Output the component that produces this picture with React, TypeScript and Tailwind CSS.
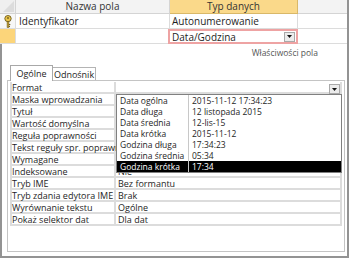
import React from 'react'

const props: [string, string][] = [
  ['Format', ''],
  ['Maska wprowadzania', ''],
  ['Tytuł', ''],
  ['Wartość domyślna', ''],
  ['Reguła poprawności', ''],
  ['Tekst reguły spr. poprawności', ''],
  ['Wymagane', 'Nie'],
  ['Indeksowane', 'Nie'],
  ['Tryb IME', 'Bez formantu'],
  ['Tryb zdania edytora IME', 'Brak'],
  ['Wyrównanie tekstu', 'Ogólne'],
  ['Pokaż selektor dat', 'Dla dat'],
]

const formats: [string, string][] = [
  ['Data ogólna', '2015-11-12 17:34:23'],
  ['Data długa', '12 listopada 2015'],
  ['Data średnia', '12-lis-15'],
  ['Data krótka', '2015-11-12'],
  ['Godzina długa', '17:34:23'],
  ['Godzina średnia', '05:34'],
  ['Godzina krótka', '17:34'],
]

function KeyIcon() {
  return (
    <svg width="8" height="13" viewBox="0 0 8 13">
      <ellipse cx="4" cy="3.6" rx="3.2" ry="3.1" fill="#e9c44a" stroke="#6f5c1c" strokeWidth="0.9" />
      <circle cx="4" cy="3" r="0.9" fill="#6f5c1c" />
      <rect x="3.1" y="6.5" width="1.8" height="6" fill="#c9a232" stroke="#6f5c1c" strokeWidth="0.6" />
      <rect x="4.9" y="9" width="1.4" height="1.1" fill="#6f5c1c" />
      <rect x="4.9" y="11" width="1.1" height="1" fill="#6f5c1c" />
    </svg>
  )
}

function DropButton() {
  return (
    <div className="w-[11px] h-[10px] bg-[#ececec] border border-[#a9a9a9] flex items-center justify-center">
      <svg width="5" height="3" viewBox="0 0 5 3">
        <path d="M0 0 H5 L2.5 3 Z" fill="#111" />
      </svg>
    </div>
  )
}

export default function App() {
  return (
    <div className="w-[350px] h-[260px] bg-white font-['Open_Sans',sans-serif] text-[#1e1e1e]">
      <div className="w-[349px] h-[258px] border-r-2 border-b-2 border-[#939393] flex flex-col">
        {/* Field grid */}
        <div className="grid grid-cols-[16px_154px_128px_1fr]">
          <div className="h-[14px] bg-[#efefef] border-r border-b border-[#d4d4d4]">
            <svg width="15" height="13" viewBox="0 0 15 13">
              <polygon points="14,1 14,12 3,12" fill="#dcdcdc" />
            </svg>
          </div>
          <div className="h-[14px] bg-[#f3f3f3] border-r border-b border-[#d4d4d4] text-center text-[10px] leading-[13px] text-[#333]">
            Nazwa pola
          </div>
          <div className="h-[14px] bg-[#fad98a] border-r border-b border-[#d9b868] text-center text-[10px] leading-[13px] text-[#333]">
            Typ danych
          </div>
          <div className="h-[14px] bg-[#f3f3f3] border-b border-[#d4d4d4]" />

          <div className="h-[15px] bg-[#f7f7f7] border-r border-b border-[#dcdcdc] flex items-center justify-center">
            <KeyIcon />
          </div>
          <div className="h-[15px] border-r border-b border-[#dcdcdc] pl-[3px] text-[10px] leading-[14px]">
            Identyfikator
          </div>
          <div className="h-[15px] border-r border-b border-[#dcdcdc] pl-[2px] text-[10px] leading-[14px]">
            Autonumerowanie
          </div>
          <div className="h-[15px] border-b border-[#dcdcdc]" />

          <div className="h-[15px] bg-[#fcd57a] border-r border-b border-[#dcdcdc]" />
          <div className="h-[15px] border-r border-b border-[#dcdcdc]" />
          <div className="h-[15px] border-2 border-[#eea3a3] -ml-[2px] pl-[2px] pr-[1px] flex items-center justify-between text-[10px] leading-[12px]">
            <span>Data/Godzina</span>
            <DropButton />
          </div>
          <div className="h-[15px] border-b border-[#dcdcdc]" />
        </div>

        {/* Field properties */}
        <div className="flex-1 border-l-2 border-[#939393] flex flex-col">
          <div className="h-[21px] flex justify-end pr-[29px] pt-[4px] text-[8.5px] leading-[10px] text-[#555]">
            Właściwości pola
          </div>
          <div className="h-[16px] flex items-end pl-[8px]">
            <div className="relative z-10 w-[43px] h-[16px] bg-white border border-b-0 border-[#a8a8a8] text-center text-[9px] leading-[15px]">
              Ogólne
            </div>
            <div className="w-[43px] h-[14px] bg-white border-t border-r border-[#b4b4b4] text-center text-[9px] leading-[13px]">
              Odnośnik
            </div>
          </div>
          <div className="relative ml-[5px] w-[338px] h-[172px] -mt-px border border-[#c4c4c4] pl-[2px] pt-[1px]">
            <div className="w-[332px] text-[9px] leading-[12px]">
              {props.map(([label, value], i) => (
                <div key={label} className="flex h-[12px] shadow-[inset_0_-2px_0_#dcdcdc]">
                  <div className="w-[106px] pl-[2px] pr-[2px] shadow-[inset_2px_0_0_#dcdcdc,inset_-2px_0_0_#dcdcdc] overflow-hidden whitespace-nowrap">
                    {label}
                  </div>
                  <div className="flex-1 pl-[2px] pr-[2px] shadow-[inset_-2px_0_0_#dcdcdc] flex justify-between">
                    <span>{value}</span>
                    {i === 0 && (
                      <div className="pt-[2px]">
                        <DropButton />
                      </div>
                    )}
                  </div>
                </div>
              ))}
            </div>

            {/* Format dropdown list */}
            <div className="absolute left-[108px] top-[13px] w-[226px] h-[79px] bg-white border border-[#808080] text-[8.5px] leading-[11px]">
              {formats.map(([name, sample], i) => (
                <div
                  key={name}
                  className={`flex h-[11px] ${i === formats.length - 1 ? 'bg-black text-white' : ''}`}
                >
                  <div className="w-[72px] pl-[3px] border-r border-[#c8c8c8] whitespace-nowrap overflow-hidden">
                    {name}
                  </div>
                  <div className="pl-[3px] whitespace-nowrap">{sample}</div>
                </div>
              ))}
            </div>
          </div>
        </div>
      </div>
    </div>
  )
}
